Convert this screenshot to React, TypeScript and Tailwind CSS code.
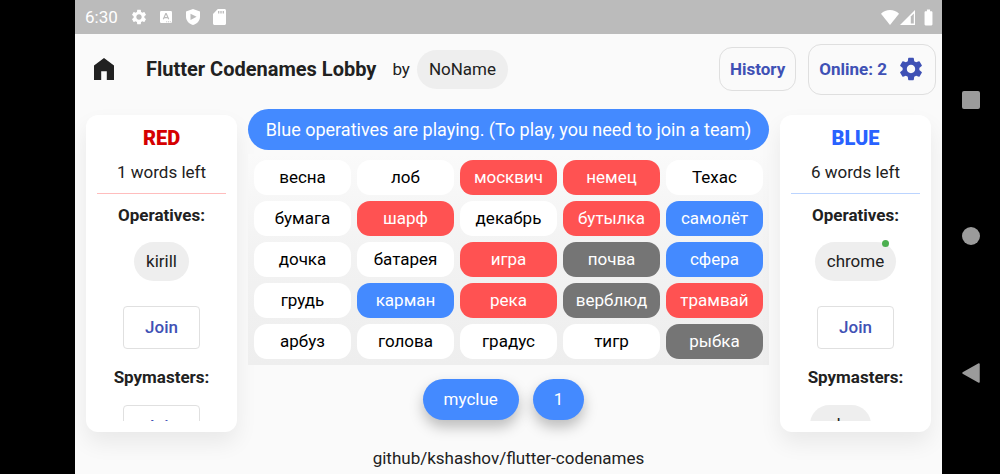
import React from "react";
import { MdSettings, MdBatteryFull } from "react-icons/md";

type Tone = "plain" | "red" | "blue" | "gray";

const WORDS: { text: string; tone: Tone }[] = [
  { text: "весна", tone: "plain" },
  { text: "лоб", tone: "plain" },
  { text: "москвич", tone: "red" },
  { text: "немец", tone: "red" },
  { text: "Техас", tone: "plain" },
  { text: "бумага", tone: "plain" },
  { text: "шарф", tone: "red" },
  { text: "декабрь", tone: "plain" },
  { text: "бутылка", tone: "red" },
  { text: "самолёт", tone: "blue" },
  { text: "дочка", tone: "plain" },
  { text: "батарея", tone: "plain" },
  { text: "игра", tone: "red" },
  { text: "почва", tone: "gray" },
  { text: "сфера", tone: "blue" },
  { text: "грудь", tone: "plain" },
  { text: "карман", tone: "blue" },
  { text: "река", tone: "red" },
  { text: "верблюд", tone: "gray" },
  { text: "трамвай", tone: "red" },
  { text: "арбуз", tone: "plain" },
  { text: "голова", tone: "plain" },
  { text: "градус", tone: "plain" },
  { text: "тигр", tone: "plain" },
  { text: "рыбка", tone: "gray" },
];

const TONES: Record<Tone, string> = {
  plain: "bg-white text-black",
  red: "bg-[#ff5252] text-white",
  blue: "bg-[#448aff] text-white",
  gray: "bg-[#757575] text-white",
};

function StatusBar() {
  return (
    <div className="flex h-[34px] shrink-0 items-center bg-[#bbbbbb] pr-1 pl-[10px] text-white">
      <span className="text-[17px] leading-5">6:30</span>
      <MdSettings className="ml-3 size-[18px]" />
      <svg className="ml-3 size-3" viewBox="0 0 12 12" aria-hidden="true">
        <rect width="12" height="12" rx="1.2" fill="currentColor" />
        <path d="M3.3 8.3 5.8 2.6h.4l2.5 5.7M4.2 6.6h3.6" fill="none" stroke="#bbbbbb" strokeWidth="1.2" />
        <path d="M6.2 10.8h1M8 10.8h1M9.8 10.8h1" stroke="#bbbbbb" strokeWidth="0.9" />
      </svg>
      <svg className="ml-[14px] h-4 w-[14px]" viewBox="0 0 14 16" aria-hidden="true">
        <path d="M7 0 14 2.6V8c0 3.6-3 6.9-7 8-4-1.1-7-4.4-7-8V2.6z" fill="currentColor" />
        <path d="M4.5 4.7v6.2L10.6 7.8z" fill="#bbbbbb" />
      </svg>
      <svg className="ml-[13px] h-4 w-[13px]" viewBox="0 0 13 16" aria-hidden="true">
        <path d="M4.8 0H11.5C12.3 0 13 .7 13 1.5v13c0 .8-.7 1.5-1.5 1.5h-10C.7 16 0 15.3 0 14.5V5z" fill="currentColor" />
        <path d="M5.7 2v2.6M8 2v2.6M10.3 2v2.6" stroke="#bbbbbb" strokeWidth="1.3" />
      </svg>
      <span className="grow" />
      <svg className="h-[15px] w-[18px]" viewBox="0 0 18 15" aria-hidden="true">
        <path d="M0 3.7C2.5 1.3 5.5 0 9 0s6.5 1.3 9 3.7L9 15z" fill="currentColor" />
      </svg>
      <svg className="ml-[1px] size-[15px]" viewBox="0 0 15 15" aria-hidden="true">
        <path d="M15 0v15H0z" fill="currentColor" />
        <path d="M10.8 6.4 13.8 3.4V13.6H10.8z" fill="#bbbbbb" />
      </svg>
      <MdBatteryFull className="ml-1 size-[19px]" />
    </div>
  );
}

function Header() {
  return (
    <header className="flex h-[70px] shrink-0 items-center pr-[6px] pl-[19px]">
      <button type="button" aria-label="Home" className="text-[#212121]">
        <svg className="h-[22px] w-5" viewBox="0 0 20 22" aria-hidden="true">
          <path d="M10 0 20 7.5V22H12.8V13.3H7.2V22H0V7.5z" fill="currentColor" />
        </svg>
      </button>
      <h1 className="ml-8 text-[20px] leading-6 font-bold">Flutter Codenames Lobby</h1>
      <span className="ml-4">by</span>
      <span className="ml-[7px] rounded-full bg-[#eeeeee] px-3 py-[9px]">NoName</span>
      <span className="grow" />
      <button type="button" className="h-11 rounded-[13px] border border-[#dfdfdf] px-[10px] font-bold text-[#3f51b5]">
        History
      </button>
      <button
        type="button"
        className="ml-3 flex h-[51px] items-center gap-[10px] rounded-[13px] border border-[#dfdfdf] px-[10px] font-bold text-[#3f51b5]"
      >
        Online: 2
        <MdSettings className="size-7" />
      </button>
    </header>
  );
}

function JoinButton() {
  return (
    <button
      type="button"
      className="h-[43px] w-[77px] shrink-0 rounded border border-[#e0e0e0] font-medium text-[#3f51b5]"
    >
      Join
    </button>
  );
}

function Player({ name, online }: { name: string; online?: boolean }) {
  return (
    <span className="relative shrink-0 rounded-full bg-[#eeeeee] px-3 py-[9px] leading-[21px]">
      {name}
      {online && <span className="absolute -top-[2px] right-[7px] size-[7px] rounded-full bg-[#4caf50]" />}
    </span>
  );
}

function TeamPanel({
  title,
  titleClass,
  ruleClass,
  left,
  operatives,
  children,
}: {
  title: string;
  titleClass: string;
  ruleClass: string;
  left: number;
  operatives: React.ReactNode;
  children: React.ReactNode;
}) {
  return (
    <section className="mt-[11px] mb-[42px] flex w-[151px] shrink-0 flex-col rounded-xl bg-white p-[11px] shadow-[0_11px_22px_rgba(0,0,0,0.07)]">
      <div className="flex min-h-0 flex-1 flex-col items-center overflow-hidden">
        <h2 className={`text-[20px] leading-6 font-black ${titleClass}`}>{title}</h2>
        <p className="mt-3">{left} words left</p>
        <hr className={`mt-[10px] w-full shrink-0 ${ruleClass}`} />
        <h3 className="mt-[11px] font-bold">Operatives:</h3>
        <div className="mt-4 flex shrink-0">{operatives}</div>
        <div className="mt-[25px] flex shrink-0">
          <JoinButton />
        </div>
        <h3 className="mt-[18px] font-bold">Spymasters:</h3>
        <div className="mt-[17px] flex shrink-0">{children}</div>
      </div>
    </section>
  );
}

function NavigationBar() {
  return (
    <nav className="flex w-[58px] shrink-0 flex-col items-center justify-center gap-[118px] text-[#9b9b9b]">
      <button type="button" aria-label="Recent apps" className="size-[18px] rounded-[2px] bg-[#9b9b9b]" />
      <button type="button" aria-label="Home screen" className="size-[18px] rounded-full bg-[#9b9b9b]" />
      <button type="button" aria-label="Back" className="h-5 w-[18px]">
        <svg className="h-5 w-[18px]" viewBox="0 0 18 20" aria-hidden="true">
          <path d="M1 10 17 1v18z" fill="currentColor" stroke="currentColor" strokeWidth="1.5" strokeLinejoin="round" />
        </svg>
      </button>
    </nav>
  );
}

export default function App() {
  return (
    <div className="flex h-screen bg-black pl-[75px] font-[Roboto,sans-serif] text-[17px] leading-[21px] text-[#212121]">
      <div className="flex min-w-0 flex-1 flex-col overflow-hidden bg-[#fafafa]">
        <StatusBar />
        <Header />
        <main className="flex min-h-0 flex-1 gap-[11px] px-[11px]">
          <TeamPanel
            title="RED"
            titleClass="text-[#d50000]"
            ruleClass="border-[#ffbdbd]"
            left={1}
            operatives={<Player name="kirill" />}
          >
            <JoinButton />
          </TeamPanel>

          <div className="flex min-w-0 flex-1 flex-col items-center pt-[5px]">
            <p className="w-full rounded-full bg-[#448aff] py-[10px] text-center text-[18px] whitespace-nowrap text-white">
              Blue operatives are playing. (To play, you need to join a team)
            </p>
            <ul className="mt-1 grid w-full grid-cols-5 gap-[6px] bg-linear-to-b from-[#fafafa] via-[#f2f2f2] to-[#eeeeee] p-[6px]">
              {WORDS.map((word) => (
                <li key={word.text}>
                  <button type="button" className={`h-[35px] w-full rounded-[13px] ${TONES[word.tone]}`}>
                    {word.text}
                  </button>
                </li>
              ))}
            </ul>
            <div className="mt-[14px] flex gap-[14px] pr-[10px] text-white">
              <span className="rounded-full bg-[#448aff] px-[21px] py-[10px] shadow-[0_7px_14px_rgba(0,0,0,0.25)]">
                myclue
              </span>
              <span className="rounded-full bg-[#448aff] px-[21px] py-[10px] shadow-[0_7px_14px_rgba(0,0,0,0.25)]">
                1
              </span>
            </div>
            <a href="https://github.com/kshashov/flutter-codenames" className="mt-7">
              github/kshashov/flutter-codenames
            </a>
          </div>

          <TeamPanel
            title="BLUE"
            titleClass="text-[#2962ff]"
            ruleClass="border-[#bbd4ff]"
            left={6}
            operatives={<Player name="chrome" online />}
          >
            <div className="flex pr-[30px]">
              <Player name="edge" />
            </div>
          </TeamPanel>
        </main>
      </div>
      <NavigationBar />
    </div>
  );
}
